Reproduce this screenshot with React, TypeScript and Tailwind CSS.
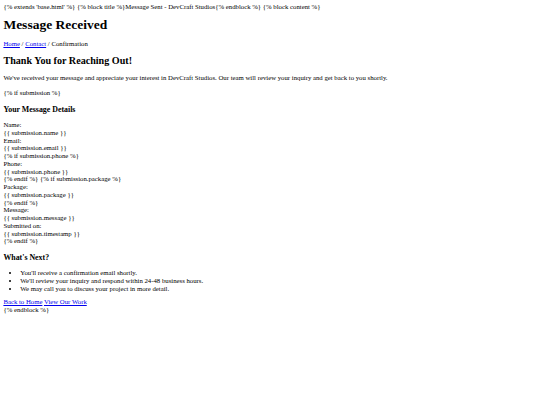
export default function App() {
  return (
    <div className="min-h-[405px] bg-white p-[3.4px] font-['Liberation_Serif',serif] text-[6.75px] leading-[1.149] text-black">
      {"{% extends 'base.html' %} {% block title %}Message Sent - DevCraft Studios{% endblock %} {% block content %}"}

      <h1 className="mt-[6px] mb-[7px] text-[2em] font-bold">Message Received</h1>

      <nav>
        <a href="#" className="text-[#0000ee] underline">Home</a> /{" "}
        <a href="#" className="text-[#0000ee] underline">Contact</a> / Confirmation
      </nav>

      <h2 className="my-[7.4px] text-[1.5em] font-bold">Thank You for Reaching Out!</h2>
      <p className="my-[7.6px]">
        We've received your message and appreciate your interest in DevCraft Studios. Our team will review your inquiry and get back to you shortly.
      </p>

      {"{% if submission %}"}
      <h3 className="my-[7.5px] text-[1.17em] font-bold">Your Message Details</h3>
      <div>
        <div>Name:</div>
        <div>{"{{ submission.name }}"}</div>
        <div>Email:</div>
        <div>{"{{ submission.email }}"}</div>
        <div>{"{% if submission.phone %}"}</div>
        <div>Phone:</div>
        <div>{"{{ submission.phone }}"}</div>
        <div>{"{% endif %} {% if submission.package %}"}</div>
        <div>Package:</div>
        <div>{"{{ submission.package }}"}</div>
        <div>{"{% endif %}"}</div>
        <div>Message:</div>
        <div>{"{{ submission.message }}"}</div>
        <div>Submitted on:</div>
        <div>{"{{ submission.timestamp }}"}</div>
      </div>
      {"{% endif %}"}

      <h3 className="my-[7.5px] text-[1.17em] font-bold">What's Next?</h3>
      <ul className="mt-[7.6px] mb-[5.5px] list-disc pl-[2.5em]">
        <li>You'll receive a confirmation email shortly.</li>
        <li>We'll review your inquiry and respond within 24-48 business hours.</li>
        <li>We may call you to discuss your project in more detail.</li>
      </ul>

      <div>
        <a href="#" className="text-[#0000ee] underline">Back to Home</a>{" "}
        <a href="#" className="text-[#0000ee] underline">View Our Work</a>
      </div>
      {"{% endblock %}"}
    </div>
  );
}
